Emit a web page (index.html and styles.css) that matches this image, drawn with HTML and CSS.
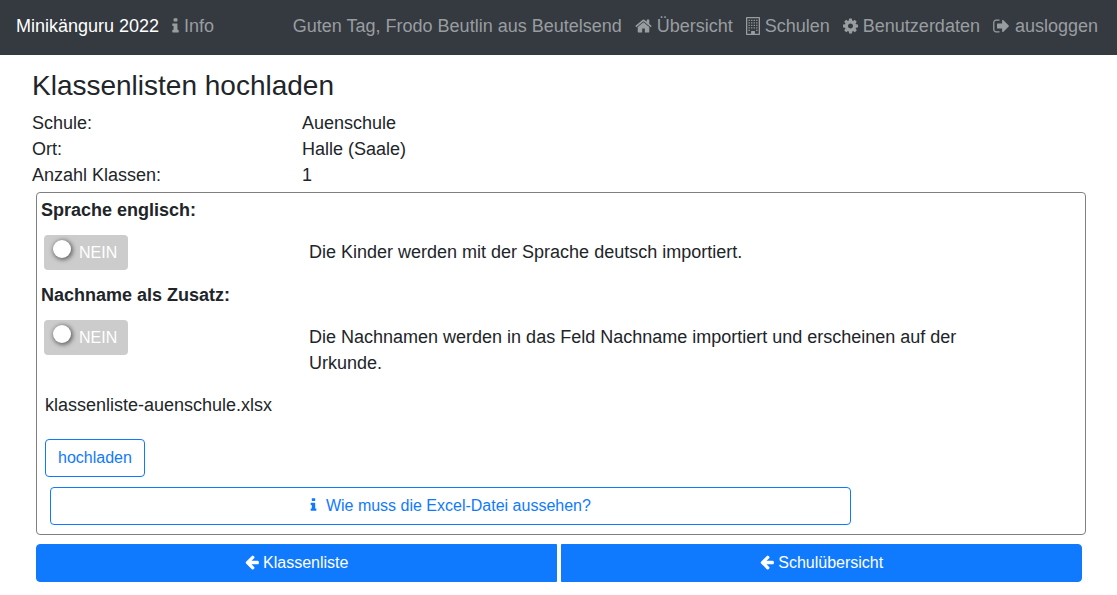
FILE: index.html
```html
<!DOCTYPE html>
<html lang="de">
<head>
<meta charset="utf-8">
<meta name="viewport" content="width=device-width, initial-scale=1">
<title>Minikänguru 2022</title>
<link rel="stylesheet" href="styles.css">
</head>
<body>
<svg class="sprite" aria-hidden="true">
  <symbol id="info" viewBox="576 0 640 1792"><path d="M1216 1344v128q0 26-19 45t-45 19h-512q-26 0-45-19t-19-45v-128q0-26 19-45t45-19h64v-384h-64q-26 0-45-19t-19-45v-128q0-26 19-45t45-19h384q26 0 45 19t19 45v576h64q26 0 45 19t19 45zm-128-1152v192q0 26-19 45t-45 19h-256q-26 0-45-19t-19-45v-192q0-26 19-45t45-19h256q26 0 45 19t19 45z"/></symbol>
  <symbol id="home" viewBox="64 0 1664 1792"><path d="M1472 992v480q0 26-19 45t-45 19h-384v-384h-256v384h-384q-26 0-45-19t-19-45v-480q0-1 .5-3t.5-3l575-474 575 474q1 2 1 6zm223-69l-62 74q-8 9-21 11h-3q-13 0-21-7l-692-577-692 577q-12 8-24 7-13-2-21-11l-62-74q-8-10-7-23.5t11-21.5l719-599q32-26 76-26t76 26l244 204v-195q0-14 9-23t23-9h192q14 0 23 9t9 23v408l219 182q10 8 11 21.5t-7 23.5z"/></symbol>
  <symbol id="building" viewBox="192 0 1408 1792"><path fill-rule="evenodd" d="M256 0h1280q26 0 45 19t19 45v1664q0 26-19 45t-45 19h-1280q-26 0-45-19t-19-45v-1664q0-26 19-45t45-19zM320 128v1536h384v-224q0-13 9.500-22.500t22.500-9.500h320q13 0 22.500 9.500t9.500 22.500v224h384v-1536z"/><path d="M448 256h128v128h-128zm256 0h128v128h-128zm256 0h128v128h-128zm256 0h128v128h-128zM448 512h128v128h-128zm256 0h128v128h-128zm256 0h128v128h-128zm256 0h128v128h-128zM448 768h128v128h-128zm256 0h128v128h-128zm256 0h128v128h-128zm256 0h128v128h-128zM448 1024h128v128h-128zm256 0h128v128h-128zm256 0h128v128h-128zm256 0h128v128h-128zM448 1280h128v128h-128zm768 0h128v128h-128z"/></symbol>
  <symbol id="cog" viewBox="128 0 1536 1792"><path d="M1152 896q0-106-75-181t-181-75-181 75-75 181 75 181 181 75 181-75 75-181zm512-109v222q0 12-8 23t-20 13l-185 28q-19 54-39 91 35 50 107 138 10 12 10 25t-9 23q-27 37-99 108t-94 71q-12 0-26-9l-138-108q-44 23-91 38-16 136-29 186-7 28-36 28h-222q-14 0-24.5-8.500t-11.500-21.500l-28-184q-49-16-90-37l-141 107q-10 9-25 9-14 0-25-11-126-114-165-168-7-10-7-23 0-12 8-23 15-21 51-66.500t54-70.500q-27-50-41-99l-183-27q-13-2-21-12.500t-8-23.500v-222q0-12 8-23t19-13l186-28q14-46 39-92-40-57-107-138-10-12-10-24 0-10 9-23 26-36 98.500-107.500t94.500-71.500q13 0 26 10l138 107q44-23 91-38 16-136 29-186 7-28 36-28h222q14 0 24.500 8.500t11.500 21.500l28 184q49 16 90 37l142-107q9-9 24-9 13 0 25 10 129 119 165 170 7 8 7 22 0 12-8 23-15 21-51 66.500t-54 70.500q26 50 41 98l183 28q13 2 21 12.500t8 23.500z"/></symbol>
  <symbol id="signout" viewBox="64 0 1664 1792"><path d="M704 1440q0 4 1 20t.5 26.500-3 23.500-10 19.500-20.500 6.500h-320q-119 0-203.500-84.500t-84.500-203.500v-704q0-119 84.500-203.500t203.500-84.500h320q13 0 22.500 9.500t9.500 22.500q0 4 1 20t.5 26.500-3 23.500-10 19.500-20.500 6.500h-320q-66 0-113 47t-47 113v704q0 66 47 113t113 47h312l11.500 1 11.500 3 8 5.500 7 9 2 13.500zm928-544q0 26-19 45l-544 544q-19 19-45 19t-45-19-19-45v-288h-448q-26 0-45-19t-19-45v-384q0-26 19-45t45-19h448v-288q0-26 19-45t45-19 45 19l544 544q19 19 19 45z"/></symbol>
  <symbol id="back" viewBox="128 0 1536 1792"><path d="M1664 896v128q0 53-32.500 90.500t-84.500 37.500h-704l293 294q38 36 38 90t-38 90l-75 76q-37 37-90 37-52 0-91-37l-651-652q-37-37-37-90 0-52 37-91l651-650q38-38 91-38 52 0 90 38l75 74q38 38 38 91t-38 91l-293 293h704q52 0 84.500 37.500t32.500 90.500z"/></symbol>
</svg>

<nav class="navbar">
  <a class="brand" href="#">Minikänguru 2022</a>
  <a class="nav-link" href="#"><svg class="icon icon-info"><use href="#info"/></svg> Info</a>
  <span class="greeting">Guten Tag, Frodo Beutlin aus Beutelsend</span>
  <a class="nav-link" href="#"><svg class="icon icon-wide"><use href="#home"/></svg> Übersicht</a>
  <a class="nav-link" href="#"><svg class="icon icon-building"><use href="#building"/></svg> Schulen</a>
  <a class="nav-link" href="#"><svg class="icon icon-cog"><use href="#cog"/></svg> Benutzerdaten</a>
  <a class="nav-link" href="#"><svg class="icon icon-wide"><use href="#signout"/></svg> ausloggen</a>
</nav>

<main class="content">
  <h1 class="title">Klassenlisten hochladen</h1>
  <dl class="facts">
    <dt>Schule:</dt><dd>Auenschule</dd>
    <dt>Ort:</dt><dd>Halle (Saale)</dd>
    <dt>Anzahl Klassen:</dt><dd>1</dd>
  </dl>

  <form class="upload">
    <div class="option-title">Sprache englisch:</div>
    <div class="option">
      <label class="toggle"><input class="knob" type="checkbox"><span>NEIN</span></label>
      <p class="option-text">Die Kinder werden mit der Sprache deutsch importiert.</p>
    </div>
    <div class="option-title">Nachname als Zusatz:</div>
    <div class="option">
      <label class="toggle"><input class="knob" type="checkbox"><span>NEIN</span></label>
      <p class="option-text">Die Nachnamen werden in das Feld Nachname importiert und erscheinen auf der Urkunde.</p>
    </div>
    <p class="filename">klassenliste-auenschule.xlsx</p>
    <button class="btn btn-outline btn-upload" type="button">hochladen</button>
    <button class="btn btn-outline btn-help" type="button"><svg class="icon icon-small icon-info"><use href="#info"/></svg>Wie muss die Excel-Datei aussehen?</button>
  </form>

  <div class="actions">
    <button class="btn btn-primary" type="button"><svg class="icon icon-small icon-back"><use href="#back"/></svg> Klassenliste</button>
    <button class="btn btn-primary" type="button"><svg class="icon icon-small icon-back"><use href="#back"/></svg> Schulübersicht</button>
  </div>
</main>
</body>
</html>
```

FILE: styles.css
```css
* {
  box-sizing: border-box;
}

body {
  margin: 0;
  background: #fff;
  color: #212529;
  font-family: "Liberation Sans", Arial, sans-serif;
  font-size: 18px;
  line-height: 26px;
}

.sprite {
  display: none;
}

.icon {
  height: 18px;
  fill: currentColor;
  vertical-align: -3px;
}

.icon-small {
  height: 16px;
  vertical-align: -2px;
}

.icon-info { width: 7px; }
.icon-wide { width: 17px; }
.icon-building { width: 14px; }
.icon-cog { width: 15px; }
.icon-back { width: 14px; }

/* Navigation */
.navbar {
  display: flex;
  align-items: center;
  gap: 13px;
  padding: 13px 19px 16px 16px;
  background: #343a40;
  white-space: nowrap;
}

.brand {
  color: #fff;
  text-decoration: none;
}

.nav-link,
.greeting {
  color: #9a9da0;
  text-decoration: none;
}

.greeting {
  margin-left: auto;
}

/* Page content */
.content {
  padding: 14px 31px 13px 32px;
}

.title {
  margin: 0 0 7px;
  font-size: 28px;
  font-weight: 400;
  line-height: 34px;
}

.facts {
  display: grid;
  grid-template-columns: 270px 1fr;
  margin: 0 0 4px;
}

.facts dd {
  margin: 0;
}

.upload {
  margin-left: 4px;
  padding: 4px 4px 9px;
  border: 1px solid #808080;
  border-radius: 4px;
}

.option-title {
  font-weight: 700;
}

.option {
  display: grid;
  grid-template-columns: 268px minmax(0, 660px);
  align-items: start;
}

.toggle {
  display: flex;
  align-items: flex-start;
  justify-self: start;
  gap: 8px;
  margin: 12px 3px;
  padding: 5px 11px 5px 9px;
  border-radius: 4px;
  background: #ccc;
  color: #fff;
  font-size: 16px;
  line-height: 25px;
}

.knob {
  appearance: none;
  width: 18px;
  height: 18px;
  margin: 0;
  border-radius: 50%;
  background: #fff;
  box-shadow: 1px 1px 4px 1px rgba(0, 0, 0, 0.5);
}

.option-text {
  margin: 16px 0;
}

.filename {
  margin: 0 4px 21px;
}

/* Buttons */
.btn {
  display: block;
  padding: 6px 12px;
  border: 1px solid #107aff;
  border-radius: 4px;
  font-family: inherit;
  font-size: 16px;
  line-height: 24px;
}

.btn-outline {
  background: #fff;
  color: #107aff;
}

.btn-upload {
  margin-left: 4px;
}

.btn-help {
  width: 77%;
  margin: 10px 0 0 9px;
}

.btn-help .icon {
  margin-right: 9px;
}

.btn-primary {
  flex: 1;
  background: #107aff;
  color: #fff;
}

.btn-primary:first-child {
  border-radius: 4px 0 0 4px;
}

.btn-primary:last-child {
  border-radius: 0 4px 4px 0;
}

.actions {
  display: flex;
  gap: 4px;
  margin: 9px 4px 0;
}
```
